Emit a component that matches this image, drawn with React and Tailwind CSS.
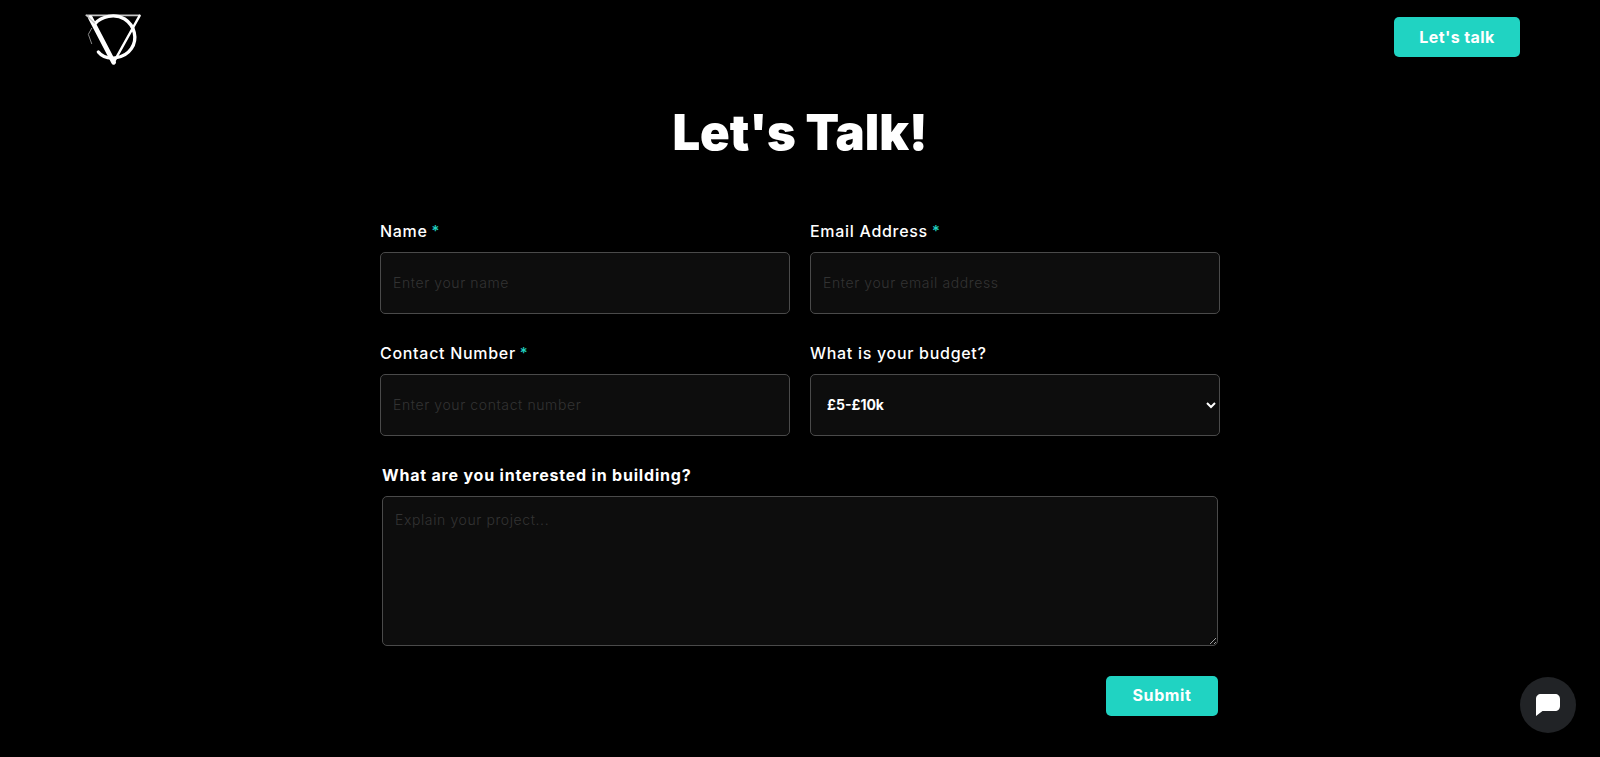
const font = { fontFamily: "Inter, sans-serif" };

const fieldClass =
  "w-full h-[62px] rounded-[5px] border border-[#4a4a4a] bg-[#0d0d0d] text-white outline-none";
const inputClass = `${fieldClass} px-3 pb-0.5 text-[14px] tracking-[0.6px] font-light placeholder:text-[#333333]`;

// hand drawn triangle and circle mark
const Logo = () => (
  <svg width="60" height="55" viewBox="70 35 180 165" fill="none" strokeLinecap="round">
    <path d="M80 45 L240 45" stroke="#c4c4c4" strokeWidth="5" />
    <path d="M240 46 L162 186" stroke="#ffffff" strokeWidth="7" />
    <path d="M92 52 L162 186" stroke="#ffffff" strokeWidth="14" />
    <path
      d="M106 70 C125 48 165 38 195 56 C225 76 235 115 215 145 C195 175 140 185 116 155"
      stroke="#ffffff"
      strokeWidth="10"
    />
    <path d="M96 84 L86 102 L96 130" stroke="#8a8a8a" strokeWidth="3" />
    <path d="M80 45 L104 68" stroke="#c4c4c4" strokeWidth="4" />
  </svg>
);

// speech bubble for the chat launcher
const ChatIcon = () => (
  <svg width="24" height="22" viewBox="0 0 24 22" fill="#ffffff">
    <path d="M5 0 H19 C22 0 24 2 24 5 V12 C24 15 22 17 19 17 H6.5 L0 22 V5 C0 2 2 0 5 0 Z" />
  </svg>
);

const Label = ({ text, required }) => (
  <label className="block h-[21px] text-[16px] leading-[20px] font-medium tracking-[0.7px] text-white">
    {text}
    {required && <span className="ml-1 align-[1px] text-[15px] tracking-normal text-[#20d3c2]">*</span>}
  </label>
);

const App = () => {
  return (
    <div className="min-h-[757px] bg-black scheme-dark" style={font}>
      {/* top bar */}
      <header className="flex items-start justify-between pl-[83px] pr-[80px] pt-[12px]">
        <Logo />
        <button className="mt-[5px] h-10 w-[126px] rounded-[5px] bg-[#20d3c2] text-[16px] tracking-[0.4px] font-bold text-white">
          Let's talk
        </button>
      </header>

      <main className="mx-auto w-[840px]">
        <h1 className="mt-[36px] text-center text-[49px] leading-[60px] font-black text-white">Let's Talk!</h1>

        {/* form */}
        <form className="mt-[58px]">
          <div className="grid grid-cols-2 gap-x-5 gap-y-[29px]">
            <div>
              <Label text="Name" required />
              <input className={`${inputClass} mt-[10px]`} placeholder="Enter your name" />
            </div>
            <div>
              <Label text="Email Address" required />
              <input className={`${inputClass} mt-[10px]`} placeholder="Enter your email address" />
            </div>
            <div>
              <Label text="Contact Number" required />
              <input className={`${inputClass} mt-[10px]`} placeholder="Enter your contact number" />
            </div>
            <div>
              <Label text="What is your budget?" />
              <select className={`${fieldClass} mt-[10px] pl-3 pb-0.5 text-[14px] font-bold`} defaultValue="£5-£10k">
                <option>£5-£10k</option>
                <option>£10-£25k</option>
              </select>
            </div>
          </div>

          <div className="mt-[29px] px-0.5">
            <label className="block h-[21px] text-[16px] leading-[21px] font-bold tracking-[0.8px] text-white">
              What are you interested in building?
            </label>
            <textarea
              className="mt-[10px] block h-[150px] w-full rounded-[5px] border border-[#4a4a4a] bg-[#0d0d0d] px-3 py-3 text-[14px] font-light tracking-[0.6px] text-white placeholder:text-[#333333] outline-none"
              placeholder="Explain your project..."
            />
            <div className="mt-[30px] flex justify-end">
              <button className="h-10 w-28 rounded-[5px] bg-[#20d3c2] pb-0.5 text-[16px] font-bold tracking-[0.6px] text-white">Submit</button>
            </div>
          </div>
        </form>
      </main>

      {/* chat launcher */}
      <button className="fixed right-6 bottom-6 flex h-14 w-14 items-center justify-center rounded-full bg-[#212326]">
        <ChatIcon />
      </button>
    </div>
  );
};

export default App;
